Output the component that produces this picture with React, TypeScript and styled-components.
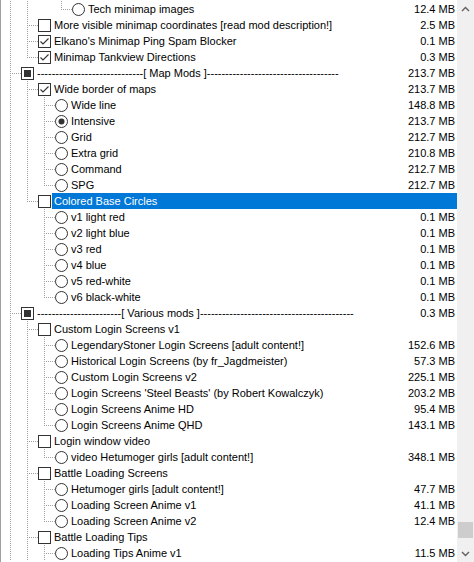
import { createGlobalStyle, css, styled } from 'styled-components';

type Kind = 'check' | 'radio';
type State = 'off' | 'on' | 'mixed';
type GuideKind = 'pipe' | 'tee' | 'elbow' | 'blank';

interface Item {
    level: number;
    kind: Kind;
    state: State;
    label: string;
    size?: string;
    selected?: boolean;
}

const dashes = (n: number): string => '-'.repeat(n);

const items: Item[] = [
    { level: 4, kind: 'radio', state: 'off', label: 'Tech minimap images', size: '12.4 MB' },
    { level: 2, kind: 'check', state: 'off', label: 'More visible minimap coordinates [read mod description!]', size: '2.5 MB' },
    { level: 2, kind: 'check', state: 'on', label: "Elkano's Minimap Ping Spam Blocker", size: '0.1 MB' },
    { level: 2, kind: 'check', state: 'on', label: 'Minimap Tankview Directions', size: '0.3 MB' },
    { level: 1, kind: 'check', state: 'mixed', label: `${dashes(29)}[ Map Mods ]${dashes(36)}`, size: '213.7 MB' },
    { level: 2, kind: 'check', state: 'on', label: 'Wide border of maps', size: '213.7 MB' },
    { level: 3, kind: 'radio', state: 'off', label: 'Wide line', size: '148.8 MB' },
    { level: 3, kind: 'radio', state: 'on', label: 'Intensive', size: '213.7 MB' },
    { level: 3, kind: 'radio', state: 'off', label: 'Grid', size: '212.7 MB' },
    { level: 3, kind: 'radio', state: 'off', label: 'Extra grid', size: '210.8 MB' },
    { level: 3, kind: 'radio', state: 'off', label: 'Command', size: '212.7 MB' },
    { level: 3, kind: 'radio', state: 'off', label: 'SPG', size: '212.7 MB' },
    { level: 2, kind: 'check', state: 'off', label: 'Colored Base Circles', selected: true },
    { level: 3, kind: 'radio', state: 'off', label: 'v1 light red', size: '0.1 MB' },
    { level: 3, kind: 'radio', state: 'off', label: 'v2 light blue', size: '0.1 MB' },
    { level: 3, kind: 'radio', state: 'off', label: 'v3 red', size: '0.1 MB' },
    { level: 3, kind: 'radio', state: 'off', label: 'v4 blue', size: '0.1 MB' },
    { level: 3, kind: 'radio', state: 'off', label: 'v5 red-white', size: '0.1 MB' },
    { level: 3, kind: 'radio', state: 'off', label: 'v6 black-white', size: '0.1 MB' },
    { level: 1, kind: 'check', state: 'mixed', label: `${dashes(23)}[ Various mods ]${dashes(42)}`, size: '0.3 MB' },
    { level: 2, kind: 'check', state: 'off', label: 'Custom Login Screens v1' },
    { level: 3, kind: 'radio', state: 'off', label: 'LegendaryStoner Login Screens [adult content!]', size: '152.6 MB' },
    { level: 3, kind: 'radio', state: 'off', label: 'Historical Login Screens (by fr_Jagdmeister)', size: '57.3 MB' },
    { level: 3, kind: 'radio', state: 'off', label: 'Custom Login Screens v2', size: '225.1 MB' },
    { level: 3, kind: 'radio', state: 'off', label: "Login Screens 'Steel Beasts' (by Robert Kowalczyk)", size: '203.2 MB' },
    { level: 3, kind: 'radio', state: 'off', label: 'Login Screens Anime HD', size: '95.4 MB' },
    { level: 3, kind: 'radio', state: 'off', label: 'Login Screens Anime QHD', size: '143.1 MB' },
    { level: 2, kind: 'check', state: 'off', label: 'Login window video' },
    { level: 3, kind: 'radio', state: 'off', label: 'video Hetumoger girls [adult content!]', size: '348.1 MB' },
    { level: 2, kind: 'check', state: 'off', label: 'Battle Loading Screens' },
    { level: 3, kind: 'radio', state: 'off', label: 'Hetumoger girls [adult content!]', size: '47.7 MB' },
    { level: 3, kind: 'radio', state: 'off', label: 'Loading Screen Anime v1', size: '41.1 MB' },
    { level: 3, kind: 'radio', state: 'off', label: 'Loading Screen Anime v2', size: '12.4 MB' },
    { level: 2, kind: 'check', state: 'off', label: 'Battle Loading Tips' },
    { level: 3, kind: 'radio', state: 'off', label: 'Loading Tips Anime v1', size: '11.5 MB' },
];

// levels of the rows scrolled out below the visible part
const levels = [...items.map((it) => it.level), 3, 2, 1];

const hasLaterSibling = (index: number, level: number): boolean => {
    for (let j = index + 1; j < levels.length; j++) {
        if (levels[j] < level) return false;
        if (levels[j] === level) return true;
    }
    return false;
};

const guidesFor = (index: number): GuideKind[] => {
    const level = items[index].level;
    const out: GuideKind[] = [];
    for (let k = 0; k < level; k++) {
        const last = k === level - 1;
        const more = hasLaterSibling(index, k + 1);
        if (last) out.push(more ? 'tee' : 'elbow');
        else out.push(more ? 'pipe' : 'blank');
    }
    return out;
};

const CheckIcon = ({ state }: { state: State }) => (
    <svg width="13" height="13" viewBox="0 0 13 13">
        <rect x="0.5" y="0.5" width="12" height="12" fill="#fff" stroke="#333" />
        {state === 'on' && <path d="M2.5 6.5 L5 9 L10.5 3.5" fill="none" stroke="#333" strokeWidth="1.1" />}
        {state === 'mixed' && <rect x="3" y="3" width="7" height="7" fill="#333" />}
    </svg>
);

const RadioIcon = ({ state }: { state: State }) => (
    <svg width="13" height="13" viewBox="0 0 13 13">
        <circle cx="6.5" cy="6.5" r="6" fill="#fff" stroke="#333" />
        {state === 'on' && <circle cx="6.5" cy="6.5" r="3" fill="#333" />}
    </svg>
);

const App = () => (
    <>
        <GlobalStyle />
        <StyledFrame>
            <StyledList>
                {items.map((item, i) => (
                    <StyledRow key={i}>
                        {guidesFor(i).map((g, k) => (
                            <StyledGuide key={k} $kind={g} />
                        ))}
                        <StyledBox>
                            {item.kind === 'check' ? <CheckIcon state={item.state} /> : <RadioIcon state={item.state} />}
                        </StyledBox>
                        <StyledLabel $selected={item.selected}>
                            <span>{item.label}</span>
                            {item.size && <StyledSize>{item.size}</StyledSize>}
                        </StyledLabel>
                    </StyledRow>
                ))}
            </StyledList>
            <StyledScrollBar>
                <StyledArrow>
                    <svg width="9" height="6" viewBox="0 0 9 6">
                        <path d="M1 5 L4.5 1.5 L8 5" fill="none" stroke="#606060" strokeWidth="1.4" />
                    </svg>
                </StyledArrow>
                <StyledTrack>
                    <StyledThumb />
                </StyledTrack>
                <StyledArrow>
                    <svg width="9" height="6" viewBox="0 0 9 6">
                        <path d="M1 1 L4.5 4.5 L8 1" fill="none" stroke="#606060" strokeWidth="1.4" />
                    </svg>
                </StyledArrow>
            </StyledScrollBar>
        </StyledFrame>
    </>
);

const GlobalStyle = createGlobalStyle`
    html, body {
        margin: 0;
        padding: 0;
        background: #fff;
    }
    body {
        font-family: 'Liberation Sans', Arial, sans-serif;
        font-size: 11px;
    }
`;

const vDots = 'repeating-linear-gradient(to bottom, #a0a0a0 0 1px, transparent 1px 2px)';
const hDots = 'repeating-linear-gradient(to right, #a0a0a0 0 1px, transparent 1px 2px)';

const StyledFrame = styled.div`
    display: flex;
    width: 474px;
    height: 562px;
    box-sizing: border-box;
    border-left: 1px solid #a0a0a0;
    background: #fff;
    overflow: hidden;
`;

const StyledList = styled.div`
    flex: 1;
    min-width: 0;
    display: flex;
    flex-direction: column;
    padding: 1px 0 0 3px;
`;

const StyledRow = styled.div`
    display: flex;
    height: 16px;
    flex-shrink: 0;
`;

const StyledGuide = styled.span<{ $kind: GuideKind }>`
    width: 17px;
    height: 16px;
    flex-shrink: 0;
    background-repeat: no-repeat;
    ${({ $kind }) =>
        $kind === 'pipe' &&
        css`
            background-image: ${vDots};
            background-size: 1px 16px;
            background-position: 6px 0;
        `}
    ${({ $kind }) =>
        $kind === 'tee' &&
        css`
            background-image: ${vDots}, ${hDots};
            background-size: 1px 16px, 10px 1px;
            background-position: 6px 0, 8px 8px;
        `}
    ${({ $kind }) =>
        $kind === 'elbow' &&
        css`
            background-image: ${vDots}, ${hDots};
            background-size: 1px 9px, 10px 1px;
            background-position: 6px 0, 8px 8px;
        `}
`;

const StyledBox = styled.span`
    display: flex;
    width: 13px;
    height: 13px;
    margin-top: 2px;
    flex-shrink: 0;
`;

const StyledLabel = styled.div<{ $selected?: boolean }>`
    flex: 1;
    min-width: 0;
    display: flex;
    justify-content: space-between;
    margin-left: 1px;
    padding: 0 2px;
    line-height: 16px;
    white-space: nowrap;
    color: ${({ $selected }) => ($selected ? '#fff' : '#000')};
    background: ${({ $selected }) => ($selected ? '#0078d7' : 'transparent')};
`;

const StyledSize = styled.span`
    flex-shrink: 0;
    padding-left: 8px;
`;

const StyledScrollBar = styled.div`
    display: flex;
    flex-direction: column;
    width: 17px;
    flex-shrink: 0;
    background: #f0f0f0;
`;

const StyledArrow = styled.div`
    display: flex;
    align-items: center;
    justify-content: center;
    height: 17px;
    flex-shrink: 0;
`;

const StyledTrack = styled.div`
    flex: 1;
    display: flex;
    flex-direction: column;
    justify-content: flex-end;
    padding-bottom: 7px;
`;

const StyledThumb = styled.div`
    height: 16px;
    margin: 0 1px;
    background: #cdcdcd;
`;

export default App;
